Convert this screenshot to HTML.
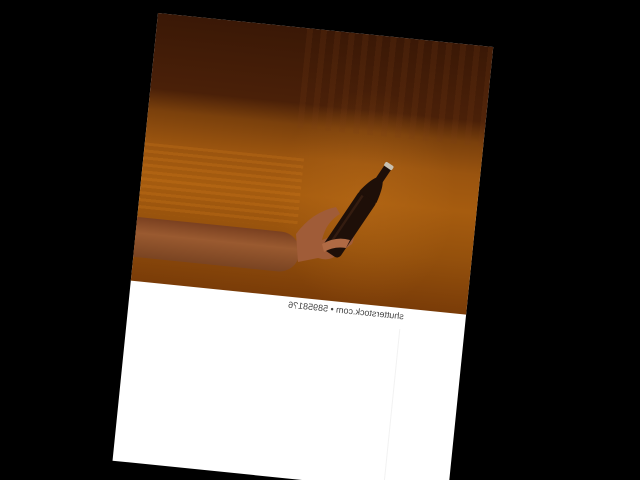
<!DOCTYPE html>
<html><head><style>
html,body{margin:0;padding:0;background:#000;width:640px;height:480px;overflow:hidden;position:relative}
#pg{position:absolute;left:158px;top:13px;width:337px;height:450px;background:#fff;transform-origin:0 0;transform:rotate(5.8deg)}
#img{position:absolute;left:0;top:0;width:337px;height:269px;overflow:hidden;
background:
radial-gradient(ellipse 90px 110px at 225px 165px,rgba(200,120,30,.3),rgba(0,0,0,0)),
linear-gradient(180deg,#3a1806 0%,#4a2008 28%,#7a400c 36%,#9a540f 48%,#a65c0f 62%,#94500c 80%,#7a3c08 100%)}
#rs{position:absolute;left:150px;top:0;width:187px;height:100px;background:repeating-linear-gradient(90deg,rgba(120,60,20,.18) 0 6px,rgba(0,0,0,0) 6px 14px)}
#stripes{position:absolute;left:0;top:130px;width:160px;height:70px;background:repeating-linear-gradient(180deg,rgba(220,130,30,.2) 0 3px,rgba(0,0,0,0) 3px 7px)}
#arm{position:absolute;left:-5px;top:205px;width:170px;height:40px;background:linear-gradient(180deg,#7a4020,#9a5a30 40%,#7a4422);border-radius:0 20px 20px 0}
#txt{position:absolute;right:62px;top:272px;font:9px "Liberation Sans",sans-serif;color:#444;transform:scaleX(-1);white-space:nowrap}
#ln{position:absolute;left:272px;top:290px;width:1px;height:160px;background:#f2f2f2}
</style></head><body>
<div id="pg">
<div id="img"><div id="rs"></div><div id="stripes"></div><div id="arm"></div></div>
<div id="txt">shutterstock.com • 589581?6</div>
<div id="ln"></div>
</div>
<svg width="640" height="480" style="position:absolute;left:0;top:0">
<path d="M296,234 Q312,212 336,207 L340,214 Q326,222 322,240 L348,230 Q357,233 352,244 L338,254 Q330,262 318,258 L298,262 Z" fill="#a05c38"/>
<g transform="translate(349,225) rotate(34) scale(.8)">
<rect x="-13" y="-45" width="26" height="88" rx="6" fill="#1e0f08"/>
<path d="M-13,-42 Q-10,-60 -5,-68 L-5,-88 L5,-88 L5,-68 Q10,-60 13,-42 Z" fill="#1e0f08"/>
<rect x="-6" y="-92" width="12" height="6" rx="2" fill="#c8c0b0"/>
<rect x="-8" y="-40" width="3" height="70" fill="#4a2a18" opacity=".5"/>
</g>
<path d="M322,244 Q336,236 350,240 L346,248 Q334,246 324,252 Z" fill="#b06a44"/>
</svg>
</body></html>
